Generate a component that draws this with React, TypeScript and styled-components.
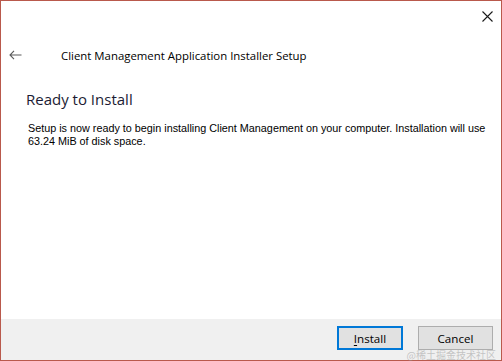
import React from "react";
import styled, { createGlobalStyle } from "styled-components";

const Global = createGlobalStyle`
  html, body { margin: 0; padding: 0; background: #ffffff; }
  #root { width: 502px; height: 361px; }
`;

const Window = styled.div`
  box-sizing: border-box;
  width: 502px;
  height: 361px;
  border: 1px solid #b9594c;
  background: #ffffff;
  display: flex;
  flex-direction: column;
  font-family: "Open Sans", "Noto Sans", sans-serif;
  color: #000;
`;

const TitleBar = styled.div`
  height: 30px;
  display: flex;
  justify-content: flex-end;
  align-items: center;
`;

const CloseButton = styled.div`
  width: 28px;
  height: 30px;
  display: flex;
  align-items: center;
  justify-content: center;
`;

const Header = styled.div`
  height: 42px;
  display: flex;
  align-items: center;
  padding-top: 6px;
  box-sizing: border-box;
`;

const BackButton = styled.div`
  width: 60px;
  padding-left: 8px;
  box-sizing: border-box;
  display: flex;
  align-items: center;
`;

const HeaderTitle = styled.div`
  font-family: "Open Sans", sans-serif;
  font-size: 11.4px;
  color: #000;
`;

const Content = styled.div`
  flex: 1;
  padding: 16px 0 0 26px;
`;

const MainInstruction = styled.div`
  font-family: "Open Sans", sans-serif;
  font-size: 15px;
  font-weight: 400;
  color: #1b1b33;
  line-height: 20px;
  margin-bottom: 13px;
  margin-left: -1px;
`;

const BodyText = styled.div`
  font-family: "Liberation Sans", Arial, sans-serif;
  font-size: 10.8px;
  line-height: 13px;
  color: #000;
  padding-left: 1px;
  white-space: nowrap;
`;

const Footer = styled.div`
  height: 41px;
  background: #f0f0f0;
  position: relative;
  display: flex;
  justify-content: flex-end;
  align-items: flex-start;
  gap: 15px;
  padding: 7px 8px 0 0;
  box-sizing: border-box;
`;

const Button = styled.button<{ $primary?: boolean; $w: number }>`
  width: ${(p) => p.$w}px;
  height: 24px;
  box-sizing: border-box;
  background: #e1e1e1;
  border: ${(p) => (p.$primary ? "2px solid #0078d7" : "1px solid #adadad")};
  font-family: "Open Sans", sans-serif;
  font-size: 11.6px;
  color: #000;
  padding: 0;
  display: flex;
  align-items: center;
  justify-content: center;
  u { text-decoration: underline; text-underline-offset: 2px; }
`;

const Watermark = styled.div`
  position: absolute;
  right: 5px;
  bottom: -1px;
  font-family: "Noto Sans CJK SC", sans-serif;
  font-size: 10px;
  line-height: 12px;
  color: rgba(150, 150, 150, 0.5);
  pointer-events: none;
`;

export default function App() {
  return (
    <>
      <Global />
      <Window>
        <TitleBar>
          <CloseButton>
            <svg width="11" height="11" viewBox="0 0 11 11">
              <path d="M0.5 0.5 L10.5 10.5 M10.5 0.5 L0.5 10.5" stroke="#1a1a1a" strokeWidth="1.1" fill="none" />
            </svg>
          </CloseButton>
        </TitleBar>
        <Header>
          <BackButton>
            <svg width="13" height="10" viewBox="0 0 13 10">
              <path d="M5 0.8 L1 5 L5 9.2 M1 5 L12.5 5" stroke="#5a5a5a" strokeWidth="1.1" fill="none" />
            </svg>
          </BackButton>
          <HeaderTitle>Client Management Application Installer Setup</HeaderTitle>
        </Header>
        <Content>
          <MainInstruction>Ready to Install</MainInstruction>
          <BodyText>
            Setup is now ready to begin installing Client Management on your computer. Installation will use
            <br />
            63.24 MiB of disk space.
          </BodyText>
        </Content>
        <Footer>
          <Button $primary $w={66}>
            <span><u>I</u>nstall</span>
          </Button>
          <Button $w={75}>Cancel</Button>
          <Watermark>@稀土掘金技术社区</Watermark>
        </Footer>
      </Window>
    </>
  );
}
